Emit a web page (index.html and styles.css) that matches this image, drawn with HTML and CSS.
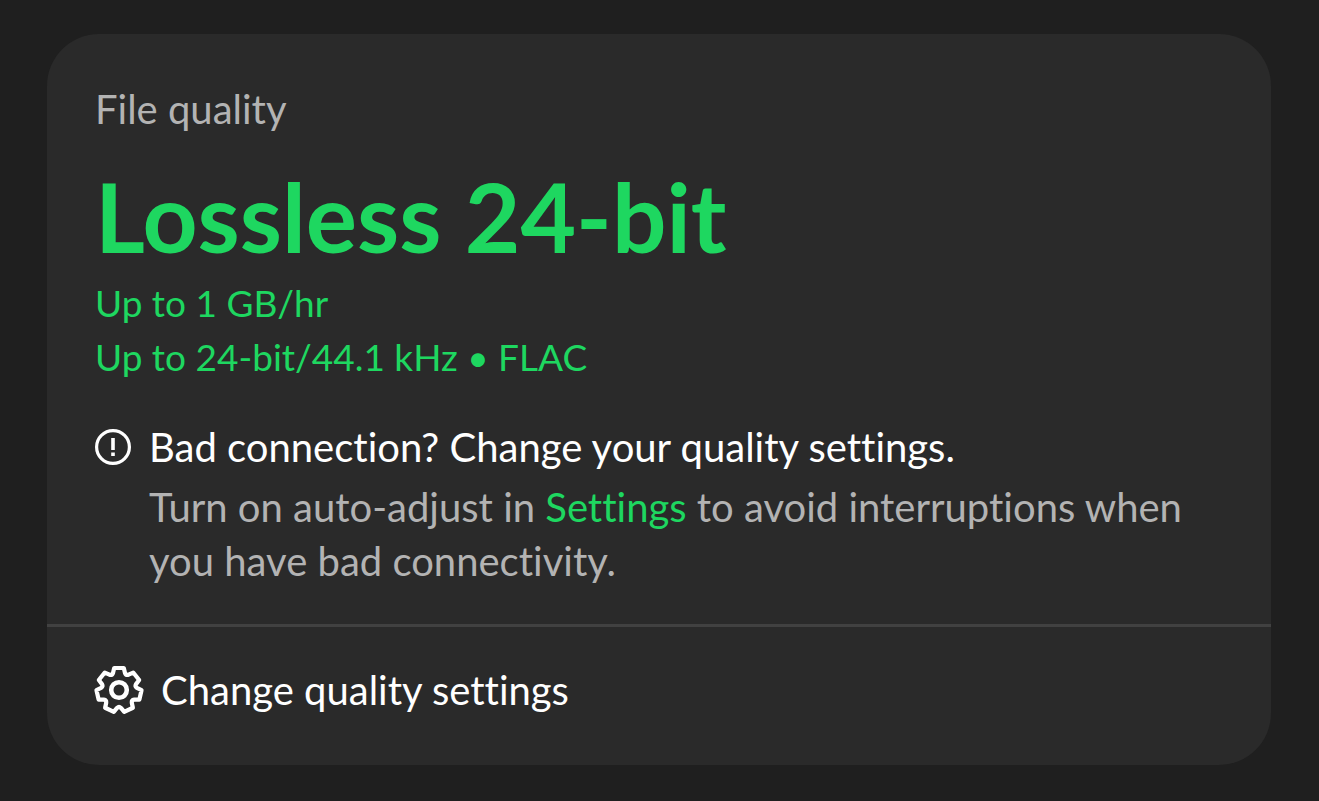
FILE: index.html
```html
<!DOCTYPE html>
<html lang="en">
<head>
<meta charset="utf-8">
<meta name="viewport" content="width=device-width, initial-scale=1">
<title>File quality</title>
<link rel="stylesheet" href="styles.css">
</head>
<body>
<main class="card">
  <section class="details">
    <h2 class="label">File quality</h2>
    <h1 class="quality">Lossless 24-bit</h1>
    <p class="spec">Up to 1 GB/hr</p>
    <p class="spec">Up to 24-bit/44.1 kHz • FLAC</p>
    <div class="notice">
      <svg class="notice-icon" viewBox="0 0 36 36" aria-hidden="true">
        <circle cx="18" cy="18" r="16.4" fill="none" stroke="currentColor" stroke-width="3.2"/>
        <path d="M16.2 9h3.6v12h-3.6zM16.2 23.6h3.6v3.4h-3.6z" fill="currentColor"/>
      </svg>
      <div class="notice-body">
        <p class="notice-title">Bad connection? Change your quality settings.</p>
        <p class="notice-text">Turn on auto-adjust in <a class="link" href="#settings">Settings</a> to avoid interruptions when you have bad connectivity.</p>
      </div>
    </div>
  </section>
  <button class="action" type="button">
    <svg class="action-icon" viewBox="0 0 48 48" aria-hidden="true" fill="none" stroke="currentColor" stroke-width="4.2" stroke-linejoin="round">
      <circle cx="24" cy="24" r="7.8" stroke-width="4.6"/>
      <path d="M18 7L19.2 2H28.8L30 7Q31.2 9.6 33.55 8.71L38.21 6.53L44.19 14.03L41.03 18.09Q39.7 20.6 41.91 21.93L46.52 24.22L44.38 33.58L39.24 33.63Q36.5 34 36.79 36.72L37.87 41.74L29.23 45.9L25.97 41.92Q24 40 22.03 41.92L18.77 45.9L10.13 41.74L11.21 36.72Q11.5 34 8.76 33.63L3.62 33.58L1.48 24.22L6.09 21.93Q8.3 20.6 6.97 18.09L3.81 14.03L9.79 6.53L14.45 8.71Q16.8 9.6 18 7z"/>
    </svg>
    <span>Change quality settings</span>
  </button>
</main>
</body>
</html>
```

FILE: styles.css
```css
* {
  box-sizing: border-box;
}

body {
  margin: 0;
  padding: 34px 48px 36px 47px;
  background: #1f1f1f;
  color: #fff;
  font-family: Lato, "Liberation Sans", sans-serif;
  font-size: 40px;
  line-height: 54px;
  font-variant-ligatures: none;
}

h1, h2, p {
  margin: 0;
}

.card {
  overflow: hidden;
  border-radius: 52px;
  background: #2a2a2a;
}

.details {
  padding: 48px;
  padding-bottom: 36px;
}

.label {
  color: #b3b3b3;
  font-size: 40px;
  font-weight: 400;
}

.quality {
  padding: 30px 0 10px;
  color: #1ed760;
  font-size: 96px;
  font-weight: 700;
  line-height: 100px;
}

.spec {
  color: #1ed760;
  font-size: 37px;
}

.notice {
  display: flex;
  gap: 18px;
  padding-top: 36px;
}

.notice-icon {
  flex: none;
  width: 36px;
  height: 36px;
  margin-top: 9px;
}

.notice-text {
  padding-top: 6px;
  color: #b3b3b3;
}

.link {
  color: #1ed760;
  text-decoration: none;
}

.action {
  display: flex;
  align-items: center;
  gap: 18px;
  width: 100%;
  padding: 36px 48px 48px;
  border: 0;
  border-top: 3px solid #414141;
  background: none;
  color: inherit;
  font: inherit;
  font-variant-ligatures: none;
  text-align: left;
}

.action-icon {
  flex: none;
  width: 48px;
  height: 48px;
  overflow: visible;
}
```
